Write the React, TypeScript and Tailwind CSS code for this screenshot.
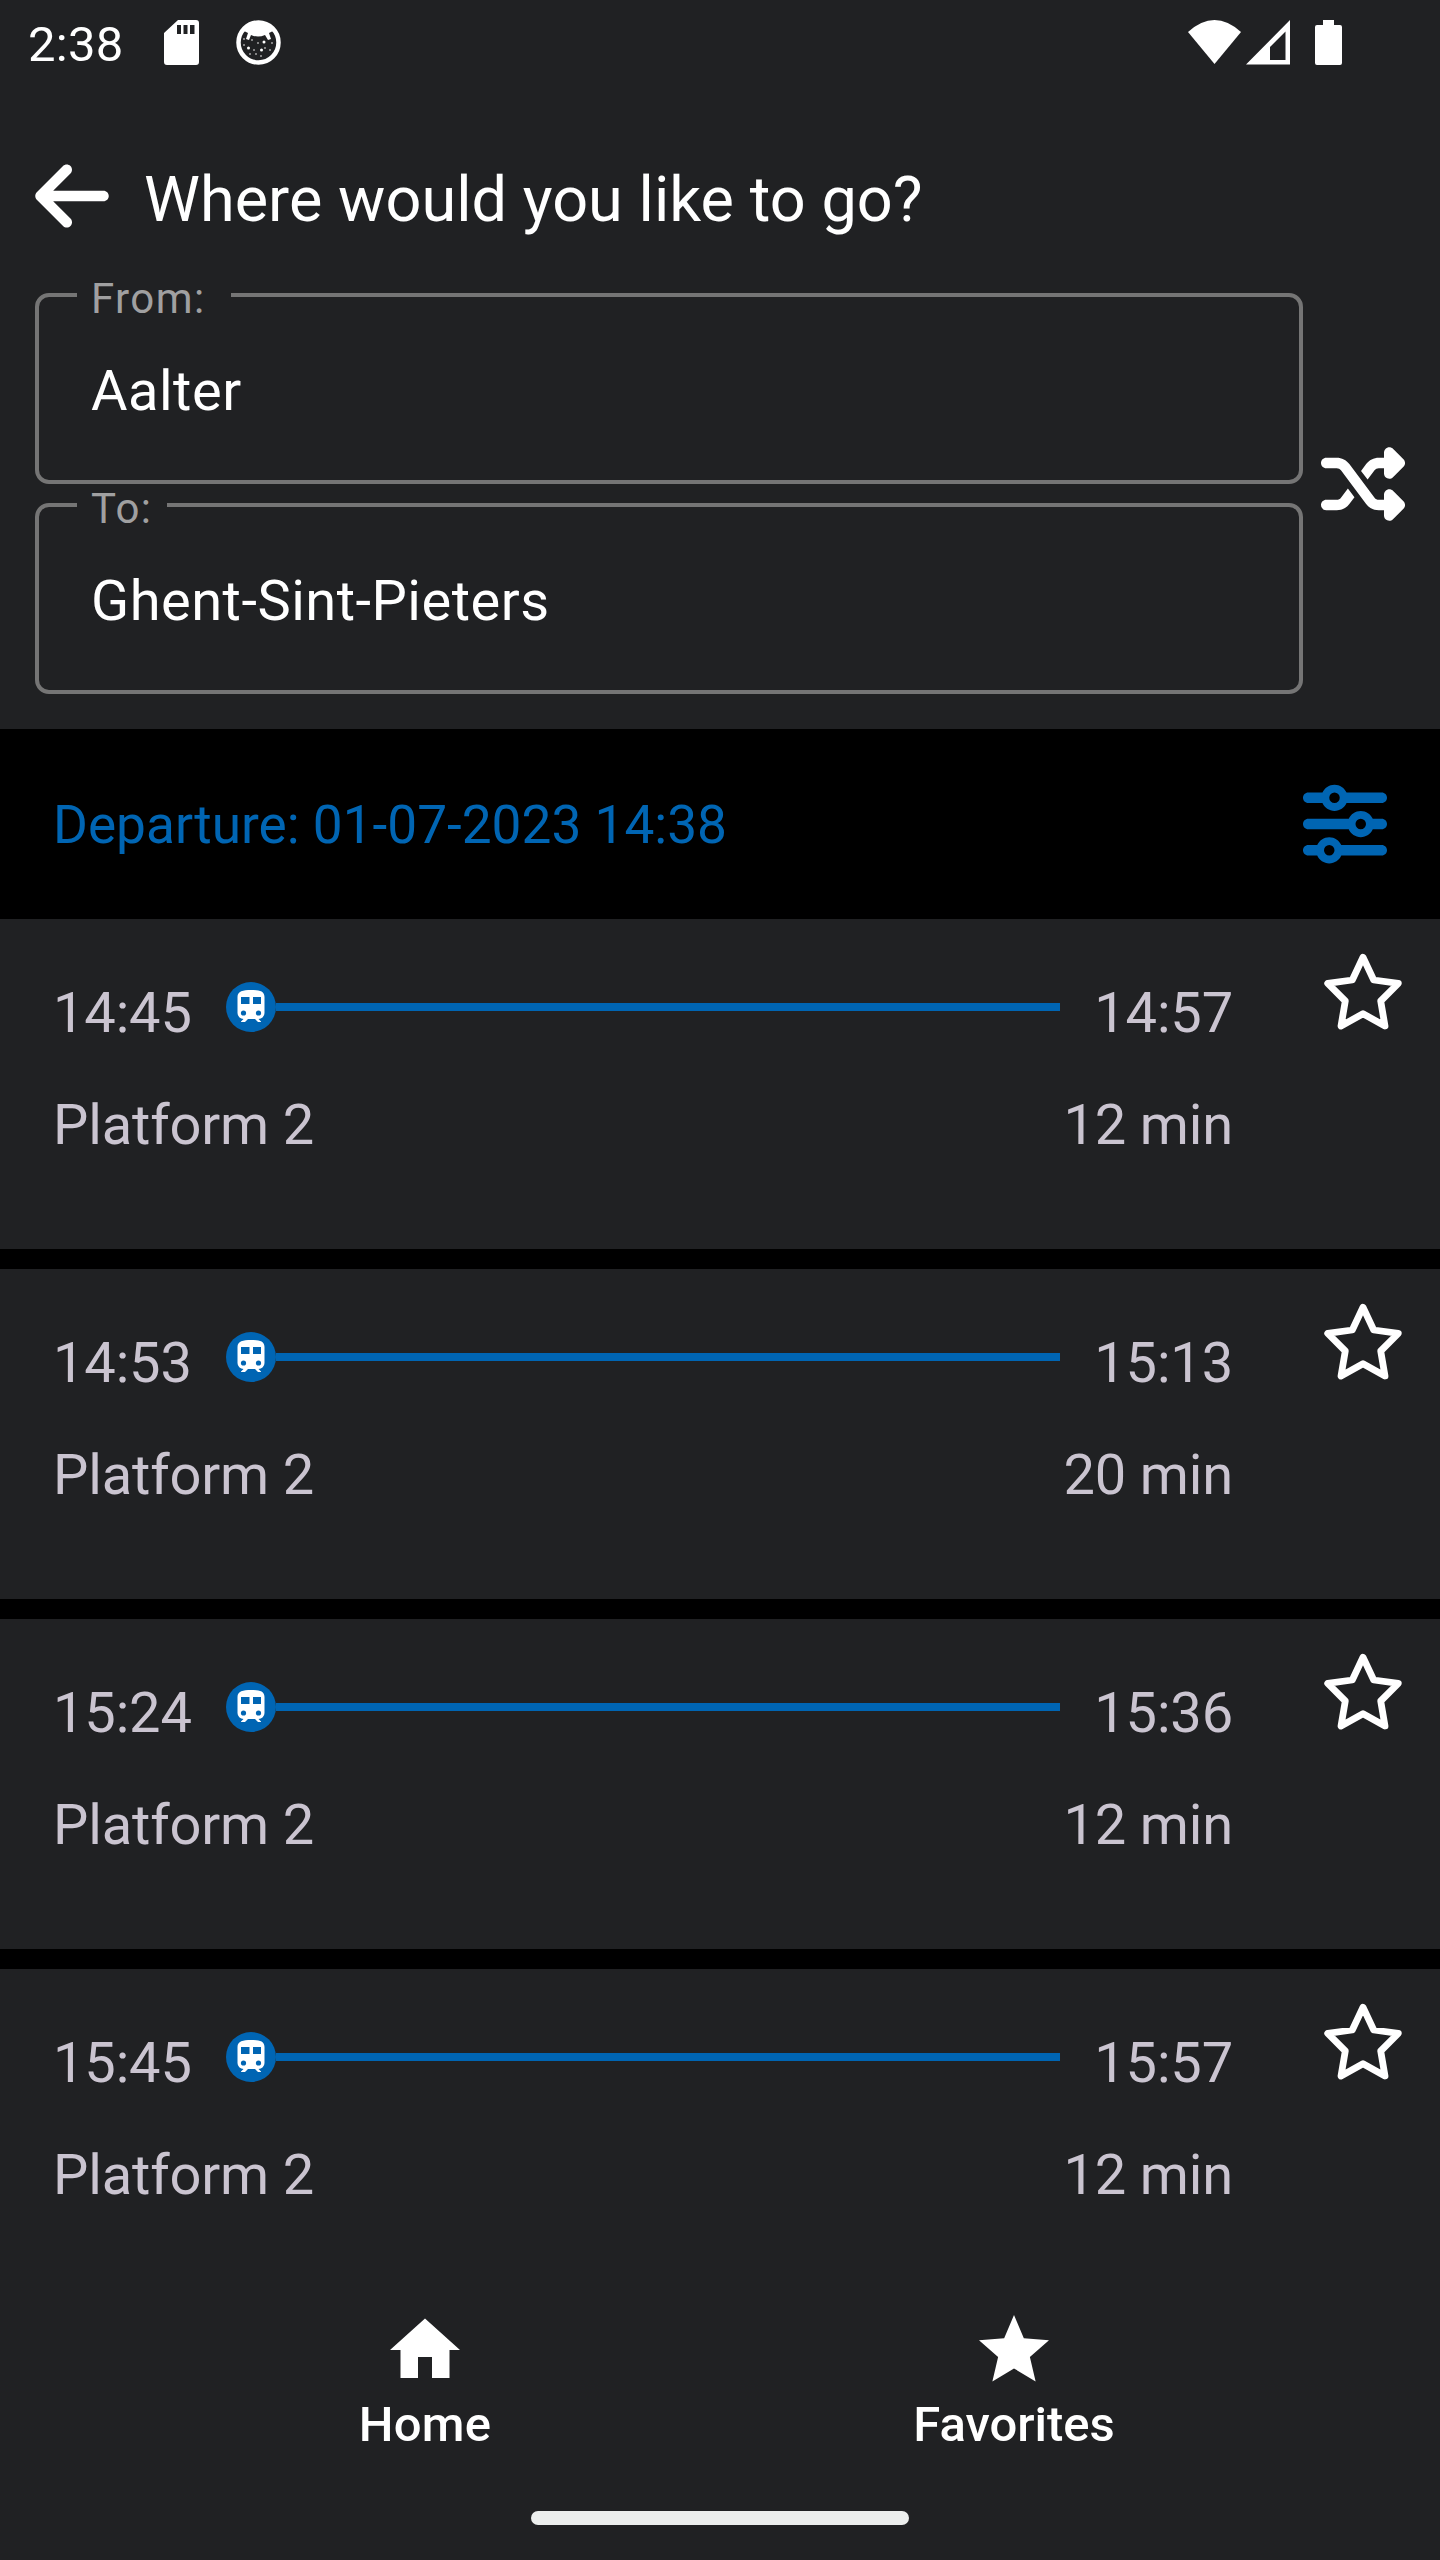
import { FaArrowLeft, FaShuffle, FaSliders } from "react-icons/fa6";
import { MdHome, MdStar } from "react-icons/md";

const trips = [
  { from: "14:45", to: "14:57", duration: "12 min" },
  { from: "14:53", to: "15:13", duration: "20 min" },
  { from: "15:24", to: "15:36", duration: "12 min" },
  { from: "15:45", to: "15:57", duration: "12 min" },
];

const fields = [
  { label: "From:", value: "Aalter", notch: "w-[154px]" },
  { label: "To:", value: "Ghent-Sint-Pieters", notch: "w-[90px]" },
];

function StatusBar() {
  return (
    <header className="flex h-[85px] items-center pl-[28px] pr-[98px]">
      <span className="w-[136px] pt-[3px] text-[49px] leading-none tracking-[0.3px]">2:38</span>
      <svg className="h-[45px] w-[35px]" viewBox="0 0 35 45" fill="currentColor">
        <path fillRule="evenodd" d="M14 0H32a3 3 0 0 1 3 3V42a3 3 0 0 1-3 3H3a3 3 0 0 1-3-3V13ZM13 5v9h4V5Zm6.500 0v9h4V5Zm6.500 0v9h4.500V5Z" />
      </svg>
      <svg className="ml-[37px] size-[45px]" viewBox="0 0 45 45">
        <circle cx="22.500" cy="22.500" r="20" fill="none" stroke="currentColor" strokeWidth="4.500" />
        <path fill="currentColor" d="M8 11Q22-6 37 11L33 13l2 6-3 1-3-5q-7 3-14 0l-2 5-3-1 2-6Z" />
        <g fill="currentColor">
          <circle cx="12.500" cy="28" r="1.500" /><circle cx="28" cy="22" r="1.500" /><circle cx="25.500" cy="30" r="1.500" />
          <circle cx="8" cy="19" r="0.800" /><circle cx="16" cy="20" r="0.800" /><circle cx="22" cy="23" r="0.800" />
          <circle cx="8" cy="25" r="0.800" /><circle cx="18" cy="30" r="0.800" /><circle cx="29" cy="28" r="0.800" />
          <circle cx="34" cy="30" r="0.800" /><circle cx="36" cy="23" r="0.800" /><circle cx="14" cy="34" r="0.800" />
          <circle cx="20" cy="34" r="0.800" /><circle cx="25" cy="36" r="0.800" />
        </g>
      </svg>
      <div className="ml-auto flex">
        <svg className="h-[45px] w-[53px]" viewBox="0 0 53 45" fill="currentColor">
          <path d="M0 12Q26.500-12 53 12L26.500 44Z" />
        </svg>
        <svg className="ml-[5px] h-[45px] w-[44px]" viewBox="0 0 44 45" fill="currentColor">
          <path fillRule="evenodd" d="M44 0V44.500H0ZM39.500 11.500 24 27V40H39.500Z" />
        </svg>
        <svg className="ml-[25px] h-[45px] w-[27px]" viewBox="0 0 27 45" fill="currentColor">
          <path d="M8 0H19V5H25a2 2 0 0 1 2 2V43a2 2 0 0 1-2 2H2a2 2 0 0 1-2-2V7a2 2 0 0 1 2-2H8Z" />
        </svg>
      </div>
    </header>
  );
}

function TrainBadge() {
  return (
    <svg className="size-[50px] shrink-0" viewBox="0 0 50 50">
      <circle cx="25" cy="25" r="25" fill="#0065b3" />
      <path
        fill="#fff"
        fillRule="evenodd"
        d="M25 8C17 8 11.500 9 11.500 15V31a6 6 0 0 0 6 6L15 39.500V40h4l3-3h7l3 3h3v-.500L32.500 37a6 6 0 0 0 6-6V15C38.500 9 33 8 25 8ZM15 15v7h8.500V15ZM27 15v7h8V15Z"
      />
      <circle cx="17.500" cy="31" r="2.600" fill="#0065b3" />
      <circle cx="32.500" cy="31" r="2.600" fill="#0065b3" />
    </svg>
  );
}

function OutlineStar() {
  return (
    <svg className="size-[84px]" viewBox="0 0 84 84" fill="none" stroke="#fff" strokeWidth="6.800" strokeLinejoin="round">
      <path d="M42 7.300 52.700 30 77.300 33.300 59.700 51 64 76 42 63.700 20 76 24.300 51 6.700 33.300 31.300 30Z" />
    </svg>
  );
}

export default function App() {
  return (
    <div className="flex h-[2560px] w-[1440px] flex-col overflow-hidden bg-[#202123] font-[Roboto,sans-serif] text-white">
      <StatusBar />
      <div className="flex h-[208px] items-start pl-[35px] pt-[69px]">
        <FaArrowLeft className="h-[84px] w-[74px]" />
        <h1 className="ml-[35px] pt-[2px] text-[63px] leading-[88px] tracking-[0.04px]">Where would you like to go?</h1>
      </div>
      <div className="flex h-[436px] items-start pl-[35px]">
        <div className="flex w-[1268px] flex-col gap-[19px]">
          {fields.map((f) => (
            <div key={f.label} className="relative h-[191px] rounded-[14px] border-4 border-[#757575] pl-[52px] pt-[58px]">
              <div className="text-[56px] leading-[72px] tracking-[0.5px]">{f.value}</div>
              <div className={`absolute -top-[20px] left-[38px] h-[46px] bg-[#202123] pl-[14px] text-[42px] leading-[44px] tracking-[1.4px] text-[#a0a0a1] ${f.notch}`}>
                {f.label}
              </div>
            </div>
          ))}
        </div>
        <FaShuffle className="ml-[18px] mt-[149px] size-[84px]" />
      </div>
      <div className="flex h-[190px] shrink-0 items-center justify-between bg-black pl-[53px] pr-[53px] text-[#0065b3]">
        <span className="pt-[4px] text-[53.2px]">Departure: 01-07-2023 14:38</span>
        <FaSliders className="size-[84px]" />
      </div>
      <main className="flex min-h-0 flex-1 flex-col gap-5 overflow-hidden bg-black">
        {trips.map((t) => (
          <section key={t.from} className="flex h-[330px] shrink-0 justify-between bg-[#202123] pl-[53px] pr-[35px] text-[56px] leading-[84px] tracking-[-0.15px] text-[#cac4d0]">
            <div className="w-[1180px] pt-[52px]">
              <div className="flex">
                <span className="w-[173px]">{t.from}</span>
                <div className="flex h-[72px] w-[834px] items-center">
                  <TrainBadge />
                  <div className="h-2 flex-1 bg-[#0065b3]" />
                </div>
                <span className="flex-1 text-right">{t.to}</span>
              </div>
              <div className="mt-[28px] flex justify-between">
                <span>Platform 2</span>
                <span>{t.duration}</span>
              </div>
            </div>
            <div className="pt-[31px]">
              <OutlineStar />
            </div>
          </section>
        ))}
      </main>
      <nav className="flex h-[280px] shrink-0 flex-col items-center pt-[28px]">
        <div className="flex w-[1178px] pr-px text-[49px] font-medium leading-[64px]">
          <div className="flex flex-1 flex-col items-center pr-px">
            <MdHome className="size-[84px]" />
            <span className="pt-px tracking-[0.2px]">Home</span>
          </div>
          <div className="flex flex-1 flex-col items-center">
            <MdStar className="size-[84px]" />
            <span className="pt-px">Favorites</span>
          </div>
        </div>
        <div className="mt-[54px] h-[14px] w-[378px] rounded-full bg-[#eceeed]" />
      </nav>
    </div>
  );
}
